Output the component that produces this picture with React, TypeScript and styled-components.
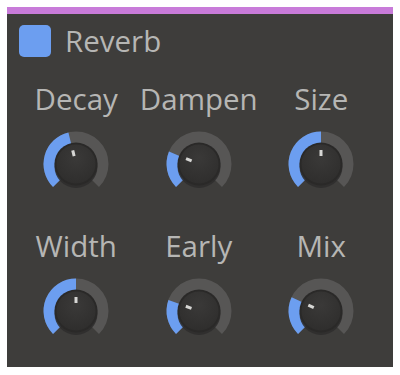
import React from 'react'
import styled, { createGlobalStyle } from 'styled-components'

const GlobalStyle = createGlobalStyle`
    body {
        margin: 0;
        background: #ffffff;
        font-family: "Open Sans", "Noto Sans", sans-serif;
    }
`

const Panel = styled.div`
    box-sizing: border-box;
    margin: 7px;
    width: 386px;
    height: 360px;
    background: #3e3d3b;
    border-top: 7px solid #c87bd9;
`

const Header = styled.div`
    display: flex;
    align-items: center;
    gap: 14px;
    padding: 11px 0 0 12px;
    margin-bottom: 24px;
`

const Swatch = styled.div`
    width: 32px;
    height: 32px;
    border-radius: 5px;
    background: #6c9ef0;
`

const Title = styled.div`
    font-size: 29.5px;
    line-height: 32px;
    color: #b6b6b4;
`

const Grid = styled.div`
    display: grid;
    grid-template-columns: repeat(3, 122.5px);
    row-gap: 29px;
    padding-left: 8px;
`

const Cell = styled.div`
    display: flex;
    flex-direction: column;
    align-items: center;
`

const Label = styled.div`
    font-size: 29.5px;
    line-height: 36px;
    height: 36px;
    color: #b6b6b4;
    margin-bottom: 12px;
`

const KnobSvg = styled.svg`
    display: block;
    width: 70px;
    height: 70px;
`

const C = 35
const START = -135
const END = 135

const pt = (r: number, deg: number) => {
    const a = (deg * Math.PI) / 180
    return [C + r * Math.sin(a), C - r * Math.cos(a)]
}

const arc = (r: number, from: number, to: number) => {
    const [x1, y1] = pt(r, from)
    const [x2, y2] = pt(r, to)
    const large = to - from > 180 ? 1 : 0
    return `M ${x1} ${y1} A ${r} ${r} 0 ${large} 1 ${x2} ${y2}`
}

interface IKnobProps {
    value: number
    id: string
}

const Knob: React.FC<IKnobProps> = ({ value, id }) => {
    const angle = START + (END - START) * value
    const [px1, py1] = pt(8, angle)
    const [px2, py2] = pt(14, angle)
    return (
        <KnobSvg viewBox="0 0 70 70">
            <defs>
                <radialGradient id={`g-${id}`} cx="50%" cy="35%" r="65%">
                    <stop offset="0%" stopColor="#3a3938" />
                    <stop offset="100%" stopColor="#2f2e2d" />
                </radialGradient>
            </defs>
            <path d={arc(26.5, START, END)} fill="none" stroke="#575655" strokeWidth={12} />
            <path d={arc(26.5, START, angle)} fill="none" stroke="#6c9ef0" strokeWidth={12} />
            <circle cx={C} cy={C + 2.5} r={21.5} fill="#2f2e2d" opacity={0.9} />
            <circle cx={C} cy={C} r={21.5} fill="#2a2928" />
            <circle cx={C} cy={C} r={19.5} fill={`url(#g-${id})`} />
            <line x1={px1} y1={py1} x2={px2} y2={py2} stroke="#d6d6d4" strokeWidth={3} />
        </KnobSvg>
    )
}

const params = [
    { name: 'Decay', value: 0.45 },
    { name: 'Dampen', value: 0.25 },
    { name: 'Size', value: 0.5 },
    { name: 'Width', value: 0.5 },
    { name: 'Early', value: 0.24 },
    { name: 'Mix', value: 0.26 },
]

const App: React.FC = () => {
    return (
        <>
            <GlobalStyle />
            <Panel>
                <Header>
                    <Swatch />
                    <Title>Reverb</Title>
                </Header>
                <Grid>
                    {params.map((p) => (
                        <Cell key={p.name}>
                            <Label>{p.name}</Label>
                            <Knob value={p.value} id={p.name} />
                        </Cell>
                    ))}
                </Grid>
            </Panel>
        </>
    )
}

export default App
